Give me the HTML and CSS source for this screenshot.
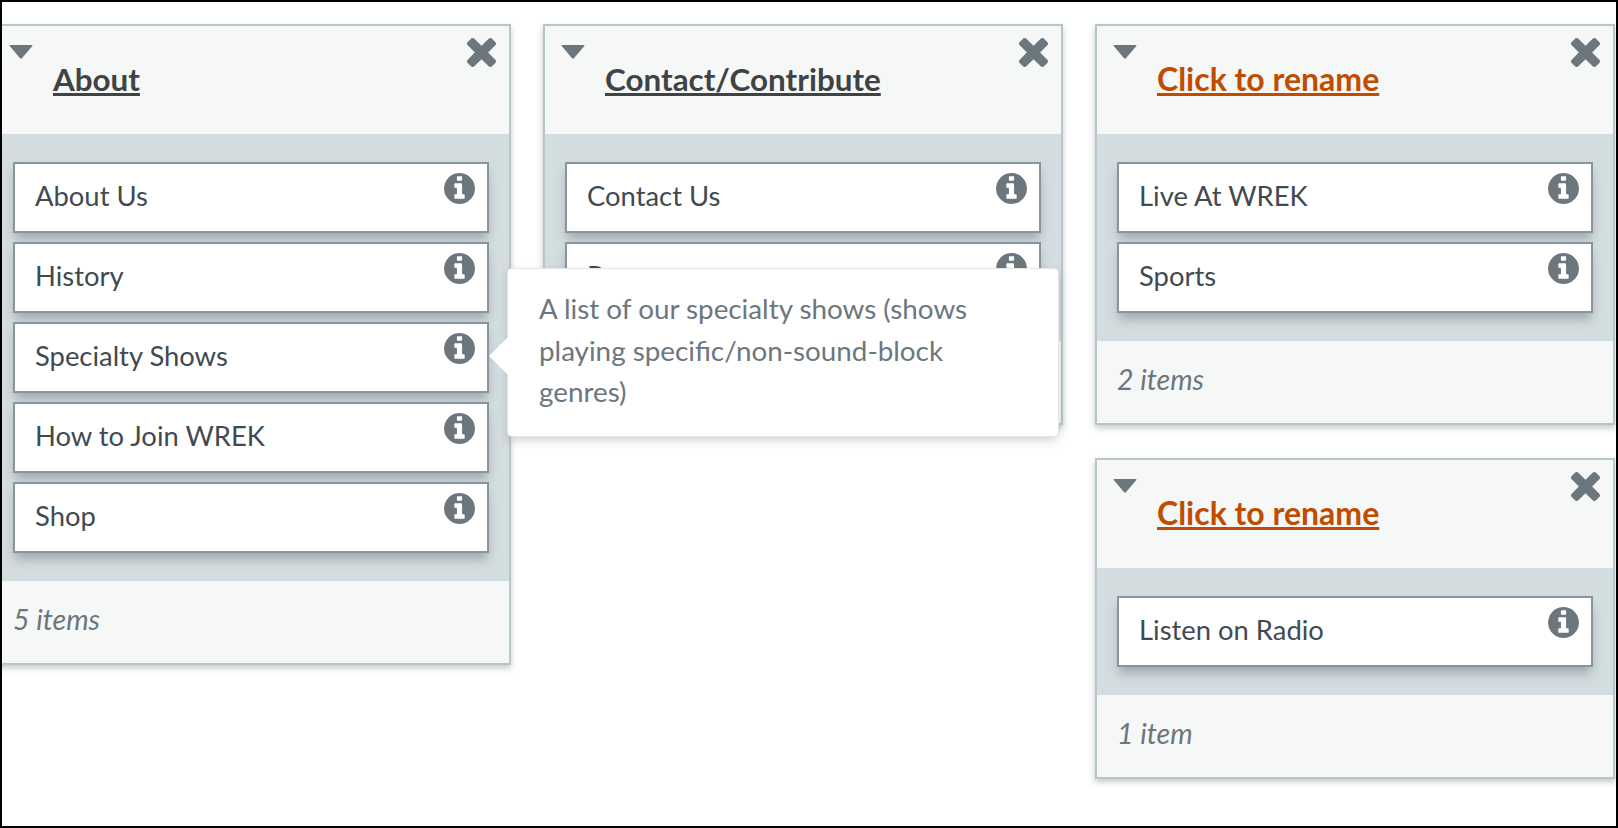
FILE: index.html
```html
<!DOCTYPE html>
<html lang="en">
<head>
  <meta charset="UTF-8">
  <meta name="viewport" content="width=device-width, initial-scale=1.0">
  <title>Menu Editor</title>
  <link rel="stylesheet" href="styles.css">
</head>
<body>
  <svg class="icon-defs" aria-hidden="true">
    <symbol id="icon-info" viewBox="128 128 1536 1536">
      <path fill-rule="evenodd" d="M1152 1376v-160q0-14-9-23t-23-9h-96v-512q0-14-9-23t-23-9h-320q-14 0-23 9t-9 23v160q0 14 9 23t23 9h96v320h-96q-14 0-23 9t-9 23v160q0 14 9 23t23 9h448q14 0 23-9t9-23zm-128-896v-160q0-14-9-23t-23-9h-192q-14 0-23 9t-9 23v160q0 14 9 23t23 9h192q14 0 23-9t9-23zm640 416q0 209-103 385.5t-279.5 279.5-385.5 103-385.5-103-279.5-279.5-103-385.5 103-385.5 279.5-279.5 385.5-103 385.5 103 279.5 279.5 103 385.5z"/>
    </symbol>
    <symbol id="icon-close" viewBox="302 366 1188 1188">
      <path d="M1490 1322q0 40-28 68l-136 136q-28 28-68 28t-68-28l-294-294-294 294q-28 28-68 28t-68-28l-136-136q-28-28-28-68t28-68l294-294-294-294q-28-28-28-68t28-68l136-136q28-28 68-28t68 28l294 294 294-294q28-28 68-28t68 28l136 136q28 28 28 68t-28 68l-294 294 294 294q28 28 28 68z"/>
    </symbol>
    <symbol id="icon-caret" viewBox="0 0 26 15">
      <path d="M1.5 0h23q1.5 0 .6 1.2L14.2 14q-1.2 1.2-2.4 0L.9 1.2Q0 0 1.5 0z"/>
    </symbol>
  </svg>

  <div class="frame">
    <div class="board">

      <div class="column">
        <section class="panel">
          <header class="panel-head">
            <svg class="caret"><use href="#icon-caret"/></svg>
            <a class="panel-title" href="#">About</a>
            <svg class="close"><use href="#icon-close"/></svg>
          </header>
          <ul class="panel-items">
            <li class="item">About Us <svg class="info"><use href="#icon-info"/></svg></li>
            <li class="item">History <svg class="info"><use href="#icon-info"/></svg></li>
            <li class="item item-open">Specialty Shows <svg class="info"><use href="#icon-info"/></svg>
              <div class="tooltip">A list of our specialty shows (shows playing specific/non-sound-block genres)</div>
            </li>
            <li class="item">How to Join WREK <svg class="info"><use href="#icon-info"/></svg></li>
            <li class="item">Shop <svg class="info"><use href="#icon-info"/></svg></li>
          </ul>
          <footer class="panel-foot">5 items</footer>
        </section>
      </div>

      <div class="column">
        <section class="panel">
          <header class="panel-head">
            <svg class="caret"><use href="#icon-caret"/></svg>
            <a class="panel-title" href="#">Contact/Contribute</a>
            <svg class="close"><use href="#icon-close"/></svg>
          </header>
          <ul class="panel-items">
            <li class="item">Contact Us <svg class="info"><use href="#icon-info"/></svg></li>
            <li class="item">Programs <svg class="info"><use href="#icon-info"/></svg></li>
          </ul>
          <footer class="panel-foot">2 items</footer>
        </section>
      </div>

      <div class="column">
        <section class="panel">
          <header class="panel-head">
            <svg class="caret"><use href="#icon-caret"/></svg>
            <a class="panel-title panel-title-new" href="#">Click to rename</a>
            <svg class="close"><use href="#icon-close"/></svg>
          </header>
          <ul class="panel-items">
            <li class="item">Live At WREK <svg class="info"><use href="#icon-info"/></svg></li>
            <li class="item">Sports <svg class="info"><use href="#icon-info"/></svg></li>
          </ul>
          <footer class="panel-foot">2 items</footer>
        </section>

        <section class="panel">
          <header class="panel-head">
            <svg class="caret"><use href="#icon-caret"/></svg>
            <a class="panel-title panel-title-new" href="#">Click to rename</a>
            <svg class="close"><use href="#icon-close"/></svg>
          </header>
          <ul class="panel-items">
            <li class="item">Listen on Radio <svg class="info"><use href="#icon-info"/></svg></li>
          </ul>
          <footer class="panel-foot">1 item</footer>
        </section>
      </div>

    </div>
  </div>
</body>
</html>
```

FILE: styles.css
```css
* {
  box-sizing: border-box;
}
html, body {
  margin: 0;
  height: 100%;
  background: #fff;
}
body {
  font-family: Lato, "Open Sans", sans-serif;
  color: #414a50;
}
.icon-defs {
  display: none;
}
.frame {
  height: 828px;
  border: 2px solid #000;
  overflow: hidden;
  padding-top: 22px;
}
.board {
  display: flex;
  gap: 32px;
  margin-left: -11px;
}
.column {
  width: 520px;
  flex: none;
  display: flex;
  flex-direction: column;
  gap: 33px;
}
.panel {
  border: 2px solid #b7c6c9;
  background: #f6f8f7;
  box-shadow: 0 3px 6px rgba(60, 75, 80, 0.3);
}
.panel-head {
  position: relative;
  height: 108px;
  padding: 35px 0 0 60px;
}
.caret {
  position: absolute;
  left: 15px;
  top: 19px;
  width: 26px;
  height: 14px;
  fill: #6b777d;
}
.close {
  position: absolute;
  right: 13px;
  top: 12px;
  width: 29px;
  height: 29px;
  fill: #6b777d;
}
.panel-title {
  font-size: 31.4px;
  font-weight: 700;
  line-height: 36px;
  color: #3f4344;
}
.panel-title-new {
  font-size: 32px;
  color: #c04c00;
}
.panel-items {
  list-style: none;
  margin: 0;
  padding: 28px 20px;
  background: #d3dcdf;
  display: flex;
  flex-direction: column;
  gap: 9px;
}
.item {
  position: relative;
  height: 71px;
  padding: 0 20px;
  background: #fff;
  border: 2px solid #88959b;
  box-shadow: 0 8px 10px -2px rgba(60, 75, 80, 0.35);
  font-size: 27.4px;
  line-height: 64px;
}
.info {
  position: absolute;
  right: 12px;
  top: 9px;
  width: 31px;
  height: 31px;
  fill: #6b777d;
}
.tooltip {
  position: absolute;
  left: 493px;
  top: -55px;
  width: 550px;
  height: 167px;
  padding: 19px 31px;
  background: #fff;
  border-radius: 4px;
  box-shadow: 0 0 0 1px #e3e6e7, 0 4px 10px rgba(60, 75, 80, 0.25);
  color: #6b777d;
  font-size: 27.8px;
  line-height: 41.5px;
  z-index: 5;
}
.tooltip::before {
  content: "";
  position: absolute;
  left: -19px;
  top: 67px;
  border-style: solid;
  border-width: 20px 20px 20px 0;
  border-color: transparent #fff transparent transparent;
}
.panel-foot {
  height: 82px;
  padding: 0 20px;
  font-size: 28.5px;
  font-style: italic;
  line-height: 76px;
  color: #6b777d;
}
```
